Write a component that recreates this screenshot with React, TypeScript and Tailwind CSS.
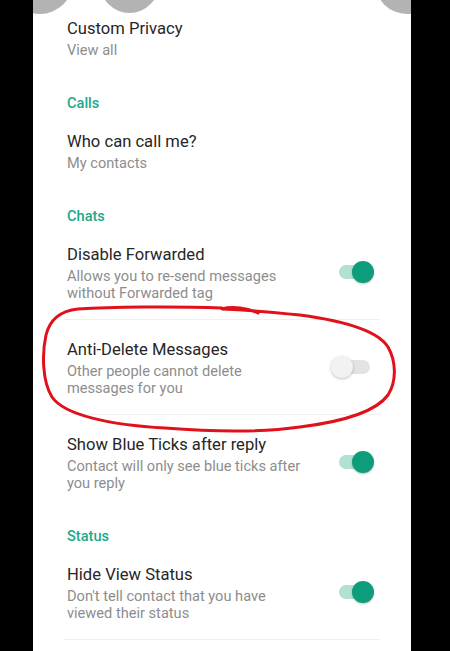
import React from "react";

type Item = {
  title: string;
  sub: string;
  toggle?: "on" | "off";
  divider?: boolean;
  circled?: boolean;
};

type Block = { header: string } | { item: Item };

const blocks: Block[] = [
  { item: { title: "Custom Privacy", sub: "View all" } },
  { header: "Calls" },
  { item: { title: "Who can call me?", sub: "My contacts" } },
  { header: "Chats" },
  {
    item: {
      title: "Disable Forwarded",
      sub: "Allows you to re-send messages\nwithout Forwarded tag",
      toggle: "on",
      divider: true,
    },
  },
  {
    item: {
      title: "Anti-Delete Messages",
      sub: "Other people cannot delete\nmessages for you",
      toggle: "off",
      divider: true,
      circled: true,
    },
  },
  {
    item: {
      title: "Show Blue Ticks after reply",
      sub: "Contact will only see blue ticks after\nyou reply",
      toggle: "on",
    },
  },
  { header: "Status" },
  {
    item: {
      title: "Hide View Status",
      sub: "Don't tell contact that you have\nviewed their status",
      toggle: "on",
      divider: true,
    },
  },
];

function Switch({ on }: { on: boolean }) {
  return (
    <div className="relative w-[43px] h-[22px] shrink-0 mb-[3px]">
      <div
        className={`absolute left-[8px] right-[4px] top-[4px] h-[14px] rounded-full ${
          on ? "bg-[#b3e0d4]" : "bg-[#e2e4e4]"
        }`}
      />
      <div
        className={`absolute top-0 w-[22px] h-[22px] rounded-full ${
          on
            ? "right-0 bg-[#0d9d7b] shadow-[0_1px_2px_rgba(0,0,0,0.25)]"
            : "left-0 bg-[#f2f2f2] shadow-[0_1px_3px_rgba(0,0,0,0.25)]"
        }`}
      />
    </div>
  );
}

function Row({ item, first }: { item: Item; first: boolean }) {
  return (
    <div className="relative">
      <div
        className={`flex items-center justify-between pl-[34px] pr-[37px] pb-[17px] ${
          first ? "pt-[19px]" : "pt-[20px]"
        }`}
      >
        <div>
          <div className="text-[16.6px] leading-[20px] text-[#262626]">{item.title}</div>
          <div className="mt-[3px] text-[14.6px] leading-[17px] text-[#8d8d8d] whitespace-pre-line">
            {item.sub}
          </div>
        </div>
        {item.toggle && <Switch on={item.toggle === "on"} />}
      </div>
      {item.divider && <div className="mx-[31px] h-px bg-[#efefef]" />}
      {item.circled && (
        <svg
          className="absolute left-[-33px] top-[-25px] pointer-events-none"
          width="450"
          height="160"
          viewBox="0 0 450 160"
        >
          <path
            d="M222 13 C 170 11, 110 12, 78 14 C 60 16, 50 24, 46 40 C 42 58, 42 86, 52 102 C 64 120, 110 130, 165 133 C 215 137, 265 137, 300 132 C 340 127, 375 118, 388 100 C 397 86, 396 66, 388 52 C 378 36, 345 26, 300 20 C 270 17, 245 15, 222 14 C 232 11, 248 13, 258 18"
            fill="none"
            stroke="#e0111b"
            strokeWidth="3"
            strokeLinecap="round"
            strokeLinejoin="round"
          />
        </svg>
      )}
    </div>
  );
}

export default function App() {
  return (
    <div
      className="w-[450px] h-[651px] bg-black flex overflow-hidden"
      style={{ fontFamily: "Roboto, 'Noto Sans', sans-serif" }}
    >
      <div className="relative ml-[33px] w-[378px] h-full bg-white overflow-hidden">
        {/* round bubbles sticking in from the top edge */}
        <div className="absolute left-[-26px] top-[-52px] w-[66px] h-[66px] rounded-full bg-[#b3b3b3]" />
        <div className="absolute left-[67px] top-[-46px] w-[59px] h-[59px] rounded-full bg-[#b3b3b3]" />
        <div className="absolute left-[342px] top-[-50px] w-[64px] h-[64px] rounded-full bg-[#b3b3b3]" />

        <div className="relative">
          {blocks.map((b, i) =>
            "header" in b ? (
              <div
                key={i}
                className="pl-[34px] pt-[19px] text-[14.6px] leading-[17px] font-medium text-[#22a889]"
              >
                {b.header}
              </div>
            ) : (
              <Row key={i} item={b.item} first={i === 0} />
            )
          )}
        </div>
      </div>
    </div>
  );
}
